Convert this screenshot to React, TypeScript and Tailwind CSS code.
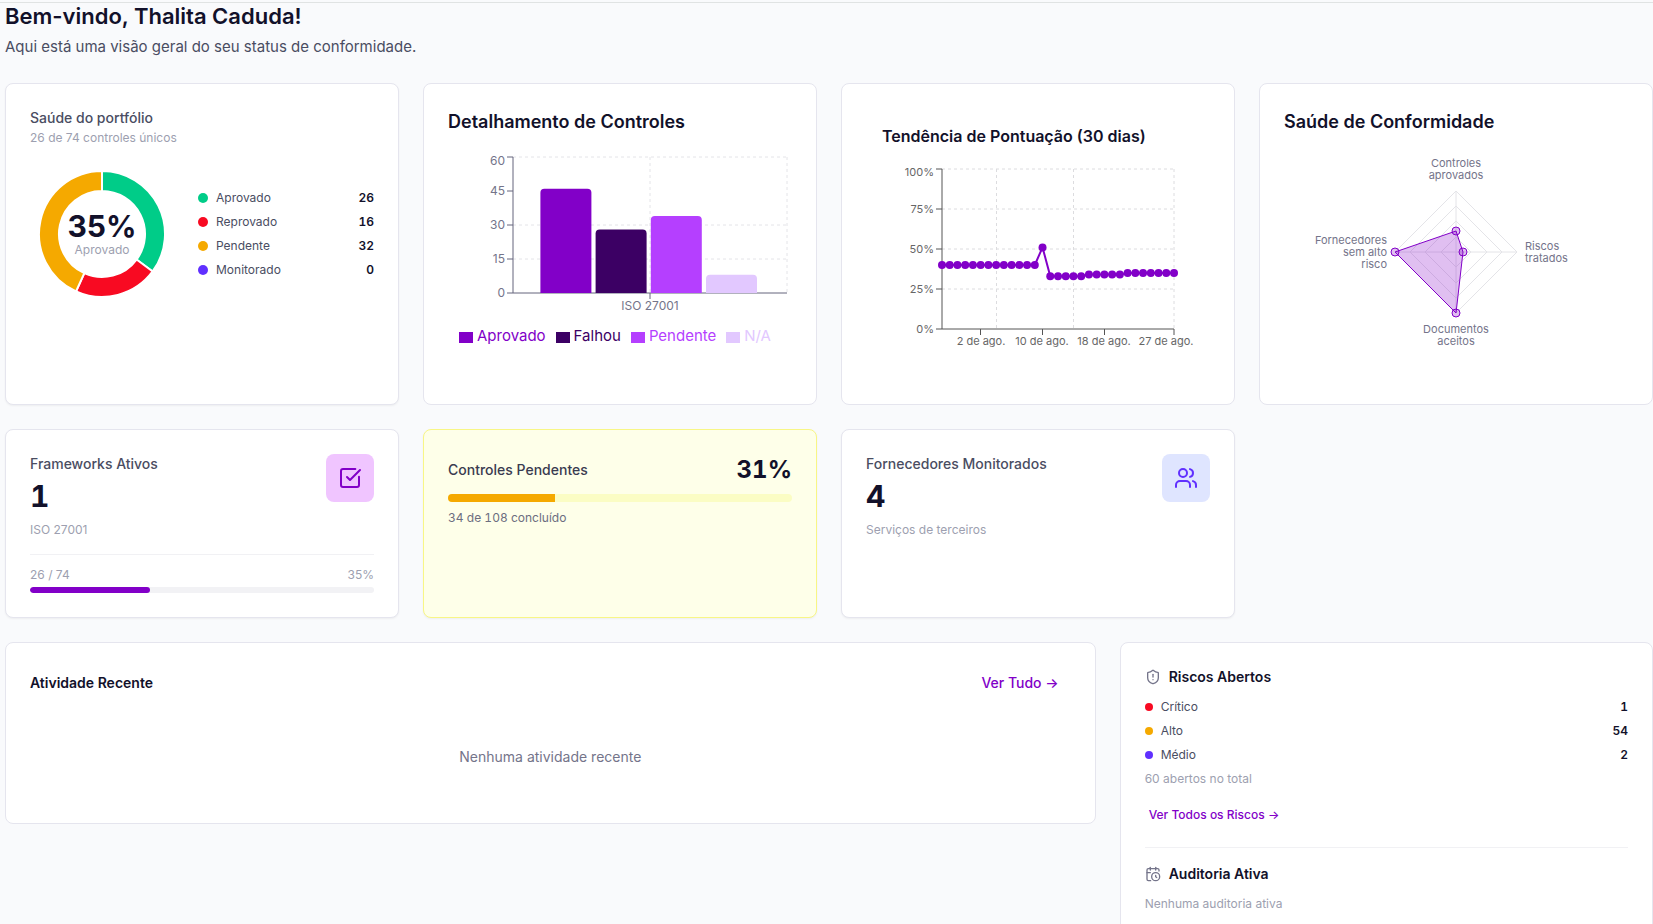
import type { ReactNode } from "react";
import { CalendarClock, ShieldAlert, SquareCheckBig, Users } from "lucide-react";

const portfolio = [
  { label: "Aprovado", value: 26, color: "#00cc88", dot: "bg-[#00cc88]" },
  { label: "Reprovado", value: 16, color: "#f80a22", dot: "bg-[#f80a22]" },
  { label: "Pendente", value: 32, color: "#f5a900", dot: "bg-[#f5a900]" },
  { label: "Monitorado", value: 0, color: "#6030ff", dot: "bg-[#6030ff]" },
];

const controls = [
  { label: "Aprovado", value: 46, color: "#8200c8" },
  { label: "Falhou", value: 28, color: "#3c0064" },
  { label: "Pendente", value: 34, color: "#b53fff" },
  { label: "N/A", value: 8, color: "#e2c8ff" },
];

const scores = [
  ...Array(13).fill(40),
  51,
  ...Array(5).fill(33),
  ...Array(5).fill(34),
  ...Array(7).fill(35),
] as number[];

const risks = [
  { label: "Crítico", value: 1, dot: "bg-[#f80a22]" },
  { label: "Alto", value: 54, dot: "bg-[#f5a900]" },
  { label: "Médio", value: 2, dot: "bg-[#6030ff]" },
];

const Card = ({ children, className = "border-[#e5e5ee] bg-white" }: { children: ReactNode; className?: string }) => (
  <section className={`rounded-lg border p-6 ${className}`}>{children}</section>
);

const DonutChart = () => {
  const total = portfolio.reduce((sum, p) => sum + p.value, 0);
  const point = (r: number, share: number) => {
    const angle = share * 2 * Math.PI;
    return `${72 + r * Math.sin(angle)} ${72 - r * Math.cos(angle)}`;
  };
  let acc = 0;

  return (
    <div className="relative size-36 shrink-0">
      <svg viewBox="0 0 144 144" className="size-36">
        {portfolio
          .filter((p) => p.value > 0)
          .map((p) => {
            const start = acc / total;
            acc += p.value;
            const end = acc / total;
            return (
              <path
                key={p.label}
                d={`M${point(63, start)}A63 63 0 0 1 ${point(63, end)}L${point(43, end)}A43 43 0 0 0 ${point(43, start)}Z`}
                fill={p.color}
                stroke="#fff"
                strokeWidth={2}
              />
            );
          })}
      </svg>
      <div className="absolute inset-0 flex flex-col items-center justify-center">
        <span className="text-3xl leading-8 font-bold text-[#12112a]">35%</span>
        <span className="text-xs text-[#9d9fb0]">Aprovado</span>
      </div>
    </div>
  );
};

const ControlsChart = () => (
  <div>
    <svg viewBox="0 0 344 168" className="h-[168px] w-full">
      <g stroke="#e4e4e8" strokeDasharray="3 3">
        <path d="M65 5H339" />
        <path d="M65 73H339" />
        <path d="M65 107H339" />
        <path d="M202 5V141" />
        <path d="M339 5V141" />
      </g>
      <g stroke="#65647c">
        <path d="M65 5V141" />
        <path d="M65 141H339" />
        <path d="M202 141V147" />
        {[5, 39, 73, 107, 141].map((y) => (
          <path key={y} d={`M59 ${y}H65`} />
        ))}
      </g>
      {controls.map((c, i) => {
        const x = 92.4 + i * 55.2;
        const top = 141 - (c.value * 136) / 60;
        return (
          <path
            key={c.label}
            d={`M${x} 141V${top + 4}q0 -4 4 -4h43q4 0 4 4V141Z`}
            fill={c.color}
          />
        );
      })}
      <g fontSize={12} fill="#74748a" textAnchor="end">
        <text x={57} y={13}>60</text>
        <text x={57} y={43}>45</text>
        <text x={57} y={77}>30</text>
        <text x={57} y={111}>15</text>
        <text x={57} y={145}>0</text>
      </g>
      <text x={202} y={158} fontSize={12} fill="#74748a" textAnchor="middle">
        ISO 27001
      </text>
    </svg>
    <ul className="mt-1 flex justify-center text-[15px] leading-6">
      {controls.map((c) => (
        <li key={c.label} className="mr-2.5 flex items-center gap-1" style={{ color: c.color }}>
          <span className="mt-0.5 h-[11px] w-3.5 bg-current" />
          {c.label}
        </li>
      ))}
    </ul>
  </div>
);

const TrendChart = () => {
  const points = scores.map((s, i) => ({ x: 60 + (i * 232) / 30, y: 165 - s * 1.6 }));

  return (
    <svg viewBox="0 0 312 200" className="h-[200px] w-full overflow-visible">
      <g stroke="#dcdcdf" strokeDasharray="3 3">
        <path d="M60 5H292" />
        <path d="M60 45H292" />
        <path d="M60 85H292" />
        <path d="M60 125H292" />
        <path d="M114.5 5V165" />
        <path d="M191.5 5V165" />
        <path d="M292 5V165" />
      </g>
      <g stroke="#555">
        <path d="M60 5V165" />
        <path d="M60 165H292" />
        {[5, 45, 85, 125, 165].map((y) => (
          <path key={y} d={`M54 ${y}H60`} />
        ))}
        <path d="M98.5 165V171M160.5 165V171M222.5 165V171M292 165V171" />
      </g>
      <polyline
        points={points.map((p) => `${p.x},${p.y}`).join(" ")}
        fill="none"
        stroke="#8200c8"
        strokeWidth={2}
      />
      {points.map((p) => (
        <circle key={p.x} cx={p.x} cy={p.y} r={4} fill="#8200c8" />
      ))}
      <g fontSize={11} fill="#666" textAnchor="end">
        <text x={52} y={12}>100%</text>
        <text x={52} y={49}>75%</text>
        <text x={52} y={89}>50%</text>
        <text x={52} y={129}>25%</text>
        <text x={52} y={169}>0%</text>
      </g>
      <g fontSize={11} fill="#666" textAnchor="middle">
        <text x={99} y={181}>2 de ago.</text>
        <text x={160} y={181}>10 de ago.</text>
        <text x={222} y={181}>18 de ago.</text>
        <text x={284} y={181}>27 de ago.</text>
      </g>
    </svg>
  );
};

const RadarChart = () => (
  <svg viewBox="0 0 344 200" className="h-[200px] w-full">
    <g fill="none" stroke="#e4e4e8">
      <path d="M172 39L233 100L172 161L111 100Z" />
      <path d="M172 54L218 100L172 146L126 100Z" />
      <path d="M172 69L203 100L172 131L141 100Z" />
      <path d="M172 85L187 100L172 115L157 100Z" />
      <path d="M172 39V161M111 100H233" />
    </g>
    <path
      d="M172 79L179 100L172 161L111 100Z"
      fill="#8200c8"
      fillOpacity={0.25}
      stroke="#8200c8"
    />
    <g fill="#8200c8" fillOpacity={0.25} stroke="#8200c8">
      <circle cx={172} cy={79} r={4} />
      <circle cx={179} cy={100} r={4} />
      <circle cx={172} cy={161} r={4} />
      <circle cx={111} cy={100} r={4} />
    </g>
    <g fontSize={11} fill="#74748a" textAnchor="middle">
      <text x={172} y={15}>Controles</text>
      <text x={172} y={27}>aprovados</text>
      <text x={172} y={181}>Documentos</text>
      <text x={172} y={193}>aceitos</text>
    </g>
    <g fontSize={11} fill="#74748a">
      <text x={241} y={98}>Riscos</text>
      <text x={241} y={110}>tratados</text>
    </g>
    <g fontSize={11} fill="#74748a" textAnchor="end">
      <text x={103} y={92}>Fornecedores</text>
      <text x={103} y={104}>sem alto</text>
      <text x={103} y={116}>risco</text>
    </g>
  </svg>
);

const App = () => {
  return (
    <div className="min-h-screen bg-[#f9fafc] font-['Inter',sans-serif] text-[#12112a]">
      <div className="h-[3px] border-b border-[#e0e3e3]" />
      <main className="pl-[5px]">
        <h1 className="text-[22px] leading-[26px] font-semibold">Bem-vindo, Thalita Caduda!</h1>
        <p className="mt-1.5 text-[15px] leading-6 text-[#4a4d62]">
          Aqui está uma visão geral do seu status de conformidade.
        </p>

        <div className="mt-6 grid grid-cols-4 gap-6">
          <Card className="border-[#e5e5ee] bg-white shadow-xs">
            <h2 className="text-sm font-medium text-[#4a4d62]">Saúde do portfólio</h2>
            <p className="mt-0.5 text-xs text-[#9d9fb0]">26 de 74 controles únicos</p>
            <div className="mt-4 flex items-center gap-6">
              <DonutChart />
              <ul className="flex grow flex-col gap-2 text-xs">
                {portfolio.map((p) => (
                  <li key={p.label} className="flex items-center gap-2">
                    <span className={`size-2.5 rounded-full ${p.dot}`} />
                    <span className="grow text-[#4a4d62]">{p.label}</span>
                    <span className="font-semibold tabular-nums">{p.value}</span>
                  </li>
                ))}
              </ul>
            </div>
          </Card>

          <Card>
            <h2 className="mb-4 text-lg font-semibold">Detalhamento de Controles</h2>
            <ControlsChart />
          </Card>

          <Card>
            <div className="p-4">
              <h2 className="mb-4 text-base font-semibold">Tendência de Pontuação (30 dias)</h2>
              <TrendChart />
            </div>
          </Card>

          <Card>
            <h2 className="mb-4 text-lg font-semibold">Saúde de Conformidade</h2>
            <RadarChart />
          </Card>

          <Card className="border-[#e5e5ee] bg-white shadow-xs">
            <div className="flex items-start justify-between">
              <div>
                <h2 className="text-sm font-medium text-[#4a4d62]">Frameworks Ativos</h2>
                <p className="mt-1 text-3xl font-bold tabular-nums">1</p>
                <p className="mt-2 text-xs text-[#9d9fb0]">ISO 27001</p>
              </div>
              <div className="flex size-12 items-center justify-center rounded-lg bg-[#f0c5ff] text-[#8200c8]">
                <SquareCheckBig className="size-6" />
              </div>
            </div>
            <div className="mt-4 border-t border-[#f1f1f4] pt-3">
              <div className="flex justify-between text-xs text-[#9d9fb0]">
                <span>26 / 74</span>
                <span>35%</span>
              </div>
              <div className="mt-1 h-1.5 overflow-hidden rounded-full bg-[#f2f2f5]">
                <div className="h-full rounded-full bg-[#8200c8]" style={{ width: "35%" }} />
              </div>
            </div>
          </Card>

          <Card className="border-[#f8f686] bg-[#feffe9] shadow-xs">
            <div className="flex items-center justify-between">
              <h2 className="text-sm font-medium text-[#3a3b50]">Controles Pendentes</h2>
              <p className="text-2xl font-bold tabular-nums">31%</p>
            </div>
            <div className="mt-2 h-2 overflow-hidden rounded-full bg-[#fbfdc4]">
              <div className="h-full bg-[#f5a900]" style={{ width: "31%" }} />
            </div>
            <p className="mt-2 text-xs text-[#6c6e80] tabular-nums">34 de 108 concluído</p>
          </Card>

          <Card className="border-[#e5e5ee] bg-white shadow-xs">
            <div className="flex items-start justify-between">
              <div>
                <h2 className="text-sm font-medium text-[#4a4d62]">Fornecedores Monitorados</h2>
                <p className="mt-1 text-3xl font-bold tabular-nums">4</p>
                <p className="mt-2 text-xs text-[#9d9fb0]">Serviços de terceiros</p>
              </div>
              <div className="flex size-12 items-center justify-center rounded-lg bg-[#dfe5ff] text-[#6030ff]">
                <Users className="size-6" />
              </div>
            </div>
          </Card>
        </div>

        <div className="mt-6 grid grid-cols-3 items-start gap-6">
          <div className="col-span-2">
            <Card>
              <div className="mb-4 flex items-center justify-between">
                <h2 className="text-sm font-semibold">Atividade Recente</h2>
                <button type="button" className="h-8 px-3 text-sm font-medium text-[#8200c8]">
                  Ver Tudo →
                </button>
              </div>
              <p className="py-8 text-center text-sm text-[#74748a]">Nenhuma atividade recente</p>
            </Card>
          </div>

          <Card>
            <h2 className="flex items-center gap-2 text-sm font-semibold">
              <ShieldAlert className="size-4 text-[#74748a]" />
              Riscos Abertos
            </h2>
            <ul className="mt-3 flex flex-col gap-2 text-xs">
              {risks.map((r) => (
                <li key={r.label} className="flex items-center gap-2">
                  <span className={`size-2 rounded-full ${r.dot}`} />
                  <span className="grow text-[#4a4d62]">{r.label}</span>
                  <span className="font-semibold tabular-nums">{r.value}</span>
                </li>
              ))}
            </ul>
            <p className="mt-2 text-xs text-[#9d9fb0]">60 abertos no total</p>
            <button type="button" className="mt-3 h-8 px-1 text-xs font-medium text-[#8200c8]">
              Ver Todos os Riscos →
            </button>
            <div className="mt-4 border-t border-[#f1f1f4] pt-4">
              <h2 className="flex items-center gap-2 text-sm font-semibold">
                <CalendarClock className="size-4 text-[#74748a]" />
                Auditoria Ativa
              </h2>
              <p className="mt-3 text-xs text-[#9d9fb0]">Nenhuma auditoria ativa</p>
            </div>
          </Card>
        </div>
      </main>
    </div>
  );
};

export default App;
